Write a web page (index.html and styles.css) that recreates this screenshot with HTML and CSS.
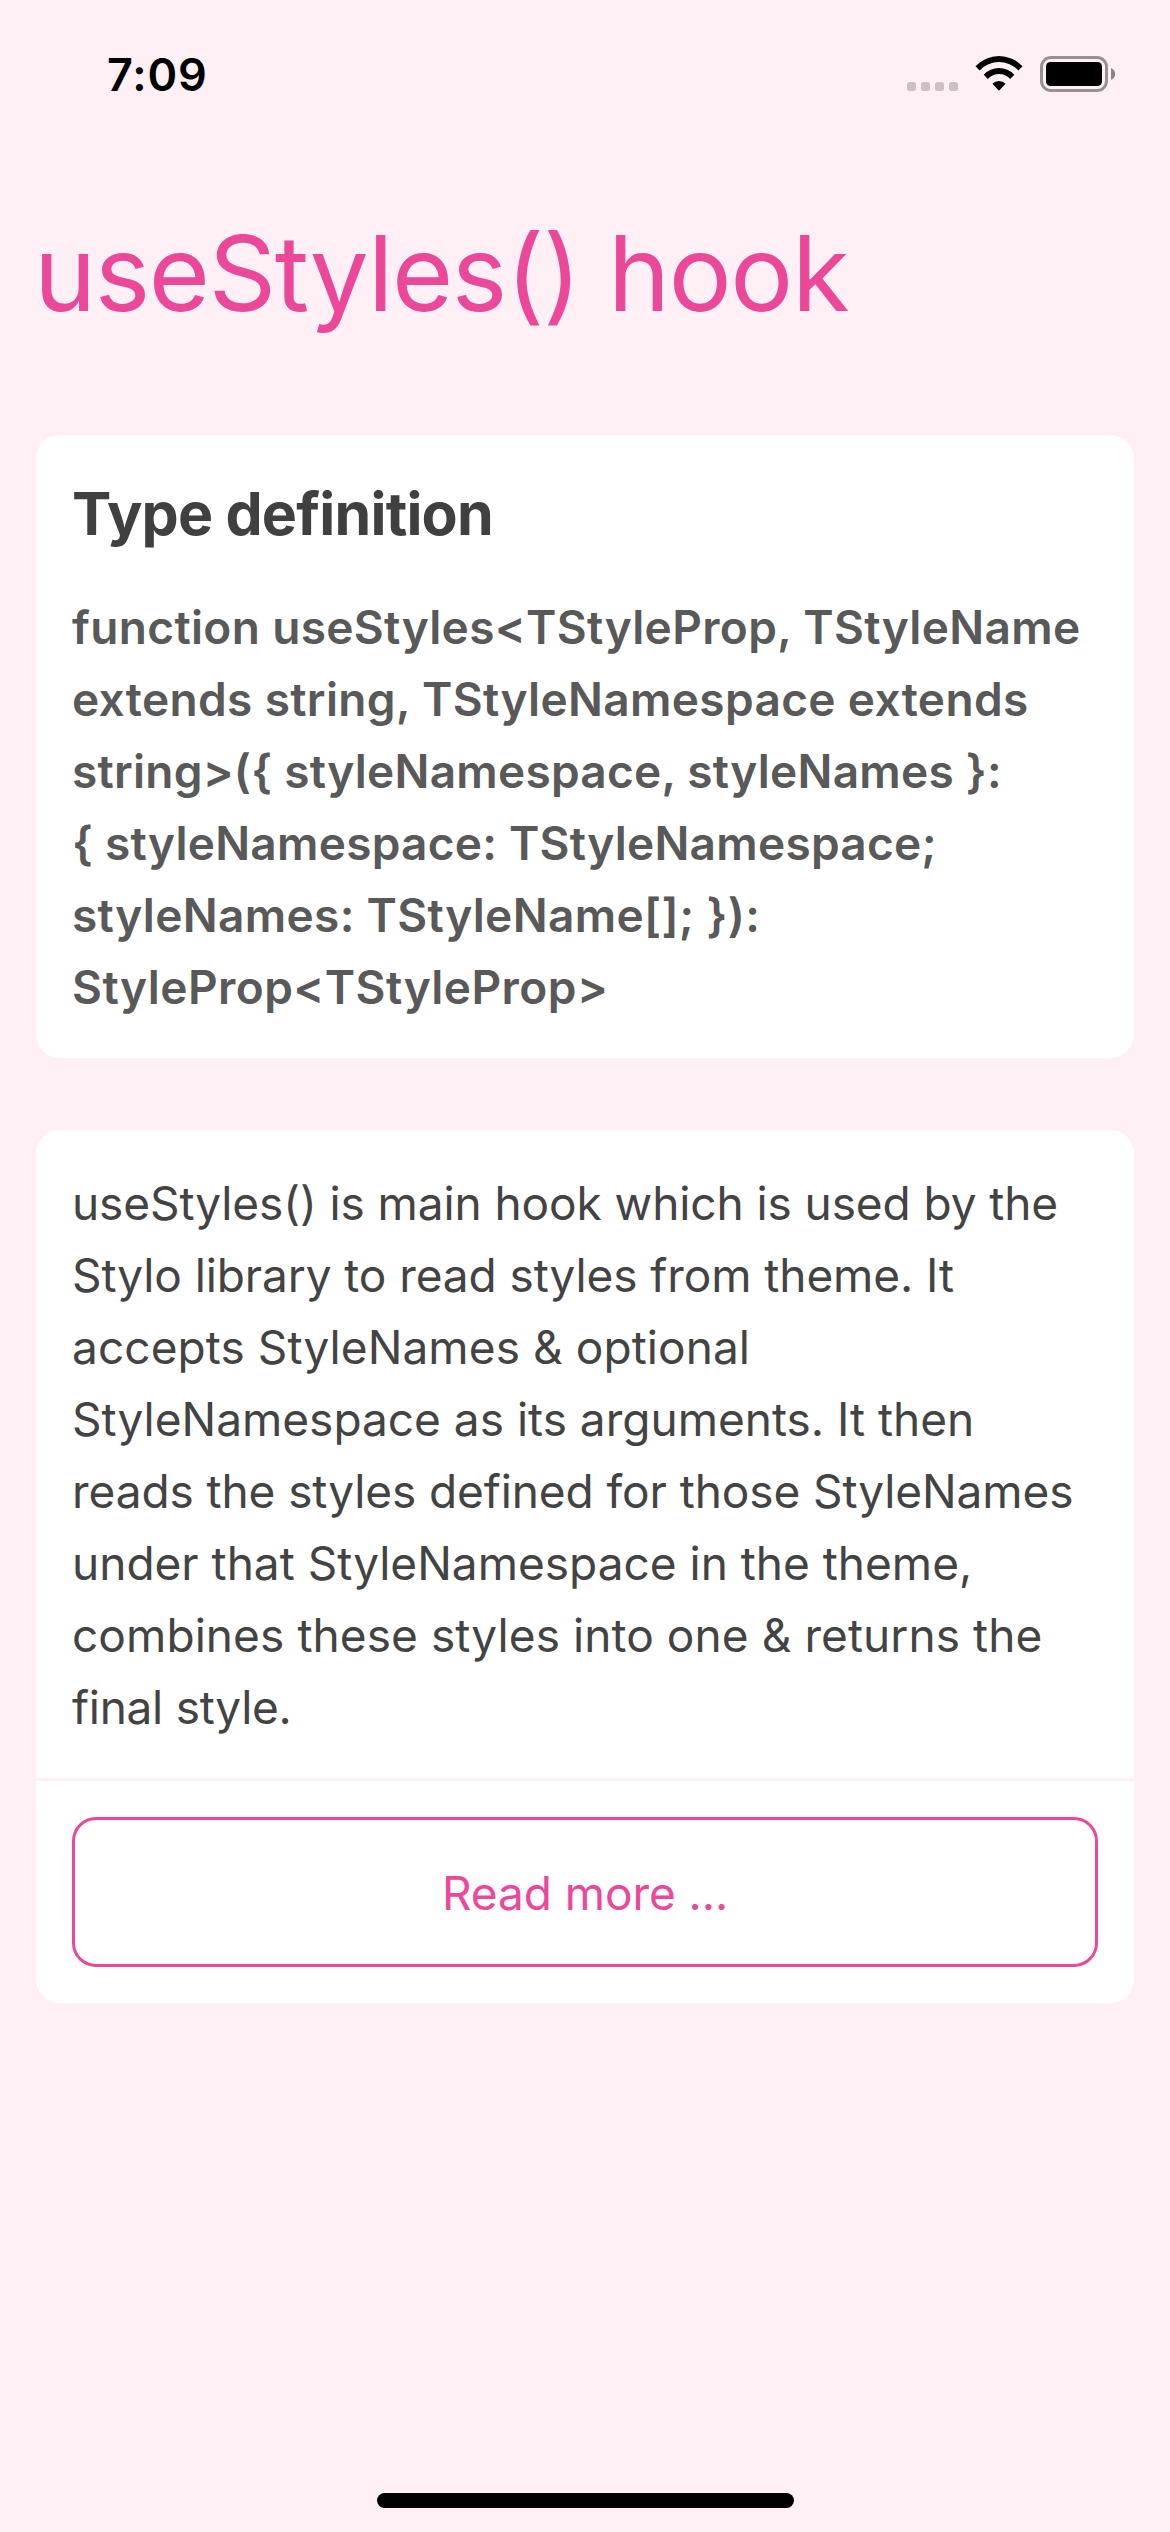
FILE: index.html
```html
<!DOCTYPE html>
<html lang="en">
<head>
<meta charset="utf-8">
<title>useStyles() hook</title>
<link rel="stylesheet" href="styles.css">
</head>
<body>
<div class="screen">
  <header class="status-bar">
    <span class="time">7:09</span>
    <div class="status-icons">
      <svg class="signal" width="51" height="9" viewBox="0 0 51 9">
        <rect x="0" width="9" height="9" rx="2.5"/>
        <rect x="14" width="9" height="9" rx="2.5"/>
        <rect x="28" width="9" height="9" rx="2.5"/>
        <rect x="42" width="9" height="9" rx="2.5"/>
      </svg>
      <svg class="wifi" width="50" height="37" viewBox="0 0 50 37">
        <path d="M1.5 11.3A32 32 0 0 1 48.5 11.3L44.4 15.5A26.6 26.6 0 0 0 5.6 15.5Z"/>
        <path d="M9.7 19.7A21 21 0 0 1 40.3 19.7L36.1 23.9A15.2 15.2 0 0 0 13.9 23.9Z"/>
        <path d="M18.4 28.8A9 9 0 0 1 31.6 28.8L25 35.8Z"/>
      </svg>
      <svg class="battery" width="75" height="36" viewBox="0 0 75 36">
        <rect class="battery-shell" x="1.5" y="1.5" width="65" height="33" rx="9.5"/>
        <rect x="6" y="6" width="56" height="24" rx="4.5"/>
        <path class="battery-cap" d="M71 12a6.4 6.4 0 0 1 0 12z"/>
      </svg>
    </div>
  </header>

  <main>
    <h1 class="title">useStyles() hook</h1>

    <section class="card">
      <div class="card-body">
        <h2 class="heading">Type definition</h2>
        <p class="signature">
          <span class="line wide">function useStyles&lt;TStyleProp, TStyleName</span>
          <span class="line wide">extends string, TStyleNamespace extends</span>
          <span class="line mid">string&gt;({ styleNamespace, styleNames }:</span>
          <span class="line mid">{ styleNamespace: TStyleNamespace;</span>
          <span class="line wide">styleNames: TStyleName[]; }):</span>
          <span class="line wider">StyleProp&lt;TStyleProp&gt;</span>
        </p>
      </div>
    </section>

    <section class="card">
      <div class="card-body">
        <p class="description">
          <span class="line snug">useStyles() is main hook which is used by the</span>
          <span class="line snug">Stylo library to read styles from theme. It</span>
          <span class="line loose">accepts StyleNames &amp; optional</span>
          <span class="line">StyleNamespace as its arguments. It then</span>
          <span class="line snug">reads the styles defined for those StyleNames</span>
          <span class="line">under that StyleNamespace in the theme,</span>
          <span class="line loose">combines these styles into one &amp; returns the</span>
          <span class="line tight">final style.</span>
        </p>
      </div>
      <div class="card-footer">
        <button class="read-more" type="button">Read more ...</button>
      </div>
    </section>
  </main>

  <div class="home-indicator"></div>
</div>
</body>
</html>
```
FILE: styles.css
```css
* {
  box-sizing: border-box;
  margin: 0;
  padding: 0;
}

body {
  background: #fff0f5;
  font-family: Inter, "Liberation Sans", sans-serif;
}

.screen {
  display: flex;
  flex-direction: column;
  width: 1170px;
  height: 2532px;
  padding-bottom: 24px;
}

.status-bar {
  display: flex;
  justify-content: space-between;
  height: 141px;
  padding: 47px 55px 0 107px;
}

.time {
  font-size: 45px;
  font-weight: 600;
  line-height: 55px;
  letter-spacing: 0.85px;
  color: #000;
}

.status-icons {
  display: flex;
  align-items: flex-end;
  height: 45px;
}

.signal {
  margin: 0 16px 1px 0;
  fill: #cdc0c5;
}

.wifi {
  margin-right: 16px;
}

.battery-shell {
  fill: none;
  stroke: #999093;
  stroke-width: 3;
}

.battery-cap {
  fill: #8c8487;
}

main {
  display: flex;
  flex: 1;
  flex-direction: column;
  gap: 72px;
  padding: 68px 36px 0;
}

.title {
  margin: 0 0 27px -2px;
  font-size: 105px;
  font-weight: 400;
  line-height: 127px;
  letter-spacing: -1.35px;
  color: #ec4899;
}

.card {
  background: #fff;
  border-radius: 24px;
}

.card-body {
  padding: 37px 36px 35px;
}

.heading {
  padding-bottom: 36px;
  font-size: 59px;
  font-weight: 700;
  line-height: 83px;
  letter-spacing: -0.81px;
  color: #404040;
}

.signature,
.description {
  font-size: 46px;
  line-height: 72px;
}

.signature {
  font-weight: 600;
  color: #595959;
}

.description {
  color: #434343;
}

.line {
  display: block;
  white-space: nowrap;
}

.wider { letter-spacing: 0.46px; }
.wide { letter-spacing: 0.35px; }
.mid { letter-spacing: 0.25px; }
.loose { letter-spacing: 0.08px; }
.snug { letter-spacing: -0.09px; }
.tight { letter-spacing: -0.27px; }

.card-footer {
  padding: 36px;
  border-top: 3px solid #fff0f5;
}

.read-more {
  display: block;
  width: 100%;
  height: 150px;
  padding-top: 2px;
  border: 3px solid #ec4899;
  border-radius: 24px;
  background: transparent;
  color: #ec4899;
  font-family: inherit;
  font-size: 46px;
  line-height: 56px;
  letter-spacing: -0.07px;
}

.home-indicator {
  align-self: center;
  width: 417px;
  height: 15px;
  border-radius: 8px;
  background: #000;
}
```
